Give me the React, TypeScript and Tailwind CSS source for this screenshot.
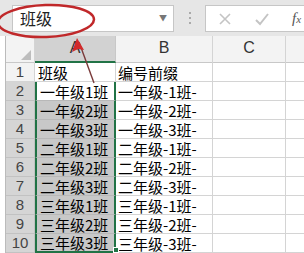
import React from "react";

const rows: [string, string][] = [
  ["班级", "编号前缀"],
  ["一年级1班", "一年级-1班-"],
  ["一年级2班", "一年级-2班-"],
  ["一年级3班", "一年级-3班-"],
  ["二年级1班", "二年级-1班-"],
  ["二年级2班", "二年级-2班-"],
  ["二年级3班", "二年级-3班-"],
  ["三年级1班", "三年级-1班-"],
  ["三年级2班", "三年级-2班-"],
  ["三年级3班", "三年级-3班-"],
];

const font = { fontFamily: '"Noto Sans CJK SC", "Liberation Sans", sans-serif' };

export default function App() {
  return (
    <div className="relative w-[304px] h-[253px] overflow-hidden bg-white text-black" style={font}>
      {/* formula bar */}
      <div className="h-[36px] bg-[#e6e6e6] flex items-center pl-[12px]">
        <div className="w-[162px] h-[27px] bg-white border border-[#c6c6c6] flex items-center pl-[7px] pr-[6px]">
          <span className="text-[16px] leading-none text-[#222]">班级</span>
          <span className="ml-auto text-[#777] text-[8px]">▼</span>
        </div>
        <div className="w-[31px] flex flex-col items-center gap-[3px]">
          <span className="w-[2px] h-[2px] bg-[#aaa]" />
          <span className="w-[2px] h-[2px] bg-[#aaa]" />
          <span className="w-[2px] h-[2px] bg-[#aaa]" />
        </div>
        <div className="flex-1 h-[27px] bg-white border border-r-0 border-[#c6c6c6] flex items-center pl-[12px]">
          <svg width="14" height="14" viewBox="0 0 14 14" className="mt-[2px]">
            <path d="M2 2 L12 12 M12 2 L2 12" stroke="#c4c4c4" strokeWidth="1.6" />
          </svg>
          <svg width="16" height="14" viewBox="0 0 16 14" className="ml-[22px] mt-[2px]">
            <path d="M2 8 L6 12 L14 2" stroke="#c4c4c4" strokeWidth="2" fill="none" />
          </svg>
          <span className="ml-[22px] italic text-[15px] text-[#555]" style={{ fontFamily: '"Liberation Serif", serif' }}>
            f<span className="text-[11px]">x</span>
          </span>
        </div>
      </div>

      {/* column headers */}
      <div className="grid grid-cols-[6px_29px_81px_97px_73px_1fr] h-[27px] bg-[#f3f3f3] border-b border-[#c8c8c8]" style={{ fontFamily: '"Liberation Sans", sans-serif' }}>
        <div className="bg-white border-r border-[#bbb]" />
        <div className="relative border-r border-[#d4d4d4]">
          <svg width="10" height="10" viewBox="0 0 10 10" className="absolute right-[3px] bottom-[3px]">
            <path d="M10 0 L10 10 L0 10 Z" fill="#bdbdbd" />
          </svg>
        </div>
        <div className="bg-[#d2d2d2] border-b-2 border-[#217346] border-r border-r-[#c8c8c8] flex items-end justify-center pb-[1px] text-[16px] text-[#333]">A</div>
        <div className="border-r border-[#d4d4d4] flex items-end justify-center pb-[3px] text-[16px] text-[#333]">B</div>
        <div className="border-r border-[#d4d4d4] flex items-end justify-center pb-[3px] text-[16px] text-[#333]">C</div>
        <div />
      </div>

      {/* rows */}
      {rows.map(([a, b], i) => {
        const sel = i > 0;
        return (
          <div key={i} className="grid grid-cols-[6px_29px_81px_97px_73px_1fr] h-[19px]">
            <div className="bg-white border-r border-[#bbb]" />
            <div
              className={
                "border-b border-r flex items-center justify-center text-[15px] leading-[18px] text-[#444] " +
                (sel ? "bg-[#d5d5d5] border-[#c2c2c2]" : "bg-[#f3f3f3] border-[#d4d4d4]")
              }
              style={{ fontFamily: '"Liberation Sans", sans-serif' }}
            >
              {i + 1}
            </div>
            <div
              className={
                "flex items-center pl-[3px] text-[15px] leading-[17px] whitespace-nowrap " +
                (sel
                  ? (i === 1 ? "bg-white " : "bg-[#c8c8c8] ") +
                    "border-x-2 border-[#217346] border-b " +
                    (i === 9 ? "border-b-2 border-b-[#217346]" : "border-b-[#b8b8b8]")
                  : "border-b border-r border-[#d4d4d4]")
              }
            >
              {a}
            </div>
            <div className="border-b border-r border-[#d4d4d4] flex items-center pl-[2px] text-[15px] leading-[17px] whitespace-nowrap">
              {b}
            </div>
            <div className="border-b border-r border-[#d4d4d4]" />
            <div className="border-b border-[#d4d4d4]" />
          </div>
        );
      })}

      {/* fill handle */}
      <div className="absolute left-[113px] top-[247px] w-[6px] h-[6px] bg-[#217346] border border-white" />

      {/* red annotation ellipse + arrow */}
      <svg className="absolute left-0 top-0 pointer-events-none" width="304" height="253" viewBox="0 0 304 253">
        <ellipse cx="46" cy="21" rx="48" ry="16" fill="none" stroke="#c0282a" strokeWidth="2.5" transform="rotate(-2 46 21)" />
        <path d="M79 42 L94 83" stroke="#7a3a3a" strokeWidth="1.4" />
        <path d="M77 38 L72 52 L78 49 L84 50 Z" fill="#d22a2a" />
      </svg>
    </div>
  );
}
